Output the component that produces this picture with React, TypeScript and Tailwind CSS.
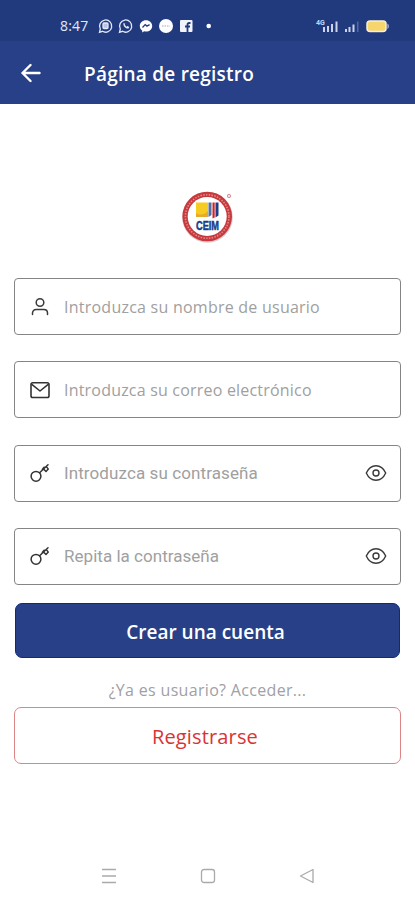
import type { ReactNode } from "react";

function UserIcon() {
  return (
    <svg width="22" height="22" viewBox="0 0 22 22" fill="none" stroke="#3a3a3a" strokeWidth="1.5" strokeLinecap="round">
      <circle cx="11" cy="6.5" r="3.8" />
      <path d="M3.5 18.5v-1.4c0-2.3 1.5-3.6 3.7-3.6h7.6c2.2 0 3.7 1.3 3.7 3.6v1.4" />
    </svg>
  );
}

function MailIcon() {
  return (
    <svg width="22" height="22" viewBox="0 0 22 22" fill="none" stroke="#333" strokeWidth="1.6" strokeLinejoin="round">
      <rect x="2" y="3.7" width="18" height="14.8" rx="1.8" />
      <path d="M2.5 5.2 11 12l8.500-6.800" />
    </svg>
  );
}

function KeyIcon() {
  return (
    <svg width="22" height="22" viewBox="0 0 22 22" fill="none" stroke="#333" strokeWidth="1.5" strokeLinecap="round" strokeLinejoin="round">
      <circle cx="7" cy="14.3" r="4.9" />
      <path d="M10.600 10.800 19 2.800M13.300 7.500l1.800-2.300M14.800 7.200l2.200 2.300 2.300-2.400-1.900-2.500" />
    </svg>
  );
}

function EyeIcon() {
  return (
    <svg width="22" height="22" viewBox="0 0 22 22" fill="none" stroke="#3a3a3a" strokeWidth="1.4" strokeLinejoin="round">
      <path d="M1.3 11C3.4 6.400 7 3.800 11 3.800s7.600 2.600 9.700 7.200c-2.100 4.600-5.700 7.200-9.700 7.200S3.400 15.600 1.300 11Z" />
      <circle cx="11" cy="11" r="3" />
    </svg>
  );
}

function Logo() {
  return (
    <svg width="52" height="52" viewBox="0 0 52 52">
      <circle cx="25.5" cy="26.4" r="25.3" fill="#ddcccc" />
      <circle cx="25.2" cy="25.5" r="24.8" fill="#c8393d" />
      <circle cx="25.2" cy="25.5" r="21.8" fill="none" stroke="#dc8a88" strokeWidth="1.6" strokeDasharray="1.5 1.3" />
      <circle cx="25.2" cy="25.500" r="19.500" fill="#fff" />
      <path d="M14 11.500h12v14.500H14z" fill="#f6cb22" />
      <path d="M14 22c3.500 2.500 9 2 12-2v6H14z" fill="#e9a92c" />
      <path d="M26.500 11.500h3v12.500l-3 2z" fill="#53719c" />
      <path d="M30.500 11.500h2.200v15l-2.200 1z" fill="#c9262c" />
      <path d="M33.500 11.500h3v13l-3 2z" fill="#243c82" />
      <text x="14" y="38.500" textLength="23" lengthAdjust="spacingAndGlyphs" fill="#173d8c" stroke="#173d8c" strokeWidth=".5" className="font-['Liberation_Sans',sans-serif] text-[12px] font-bold">
        CEIM
      </text>
      <circle cx="47" cy="5" r="1.700" fill="#f5dede" stroke="#c98080" strokeWidth=".8" />
    </svg>
  );
}

function StatusBar() {
  return (
    <div className="flex h-[41px] items-center bg-[#21397d] pt-[11px] pl-[60px]">
      <span className="w-[38px] font-['Open_Sans',sans-serif] text-[14px] leading-none tracking-[0.2px] text-[#e4e9f8]">8:47</span>
      <svg width="116" height="16" viewBox="0 0 116 16" fill="none" stroke="#e4e9f8" strokeWidth="1.3">
        <path d="M1.5 14.3 2.3 11a6.1 6.1 0 1 1 2.2 2.3z" />
        <rect x="5" y="5" width="5" height="5.5" rx="1" fill="#b9c5e4" />
        <path d="M21.5 14.3 22.3 11a6.1 6.1 0 1 1 2.2 2.3z" />
        <path d="M25.5 5c-.8 3 2.3 6 5 5.5l.8-1.5-1.8-1-1 .8-1.8-2 .6-1z" fill="#e4e9f8" stroke="none" />
        <path d="M48 2.200c-3.500 0-6.200 2.500-6.200 5.700 0 2 1 3.500 2.400 4.500v2l2-1.100c.6.200 1.200.3 1.800.3 3.500 0 6.200-2.500 6.200-5.700S51.500 2.200 48 2.200z" fill="#fff" stroke="none" />
        <path d="m44.500 9.500 2.700-2.900 1.700 1.500 2.700-1.500" stroke="#21397d" />
        <circle cx="68" cy="8" r="7" fill="#fff" stroke="none" />
        <path d="M64 8h8" stroke="#bdc6dd" strokeDasharray="1.5 1" />
        <rect x="82" y="2" width="12.5" height="12" rx="1" fill="#f2f4fb" stroke="none" />
        <path d="M92.500 5h-1.300c-1.300 0-1.700.7-1.700 1.700V14M87 8.500h5" stroke="#21397d" strokeWidth="1.8" />
        <circle cx="110.700" cy="8" r="2.300" fill="#fff" stroke="none" />
      </svg>
      <svg width="76" height="16" viewBox="0 0 76 16" className="ml-[101px]" fill="#cbd4eb">
        <text x="1" y="7" fill="#cbd4eb" className="font-['Roboto',sans-serif] text-[7px] font-bold">4G</text>
        <path d="M8 9h2v5H8zM12 8h2v6h-2zM16 6h2v8h-2zM20.500 3.500h2V14h-2z" />
        <path d="M30 11h2v3h-2zM33.500 9h2v5h-2zM37.500 6.500h2V14h-2z" />
        <path d="M42 3.500h1.500V14H42z" fill="#5269a2" />
        <rect x="52" y="3" width="19" height="10.500" rx="3" fill="#f7d56d" stroke="#f3efdc" strokeWidth="1.500" />
        <path d="M72.500 5.500c1.600.7 1.600 4.800 0 5.500z" />
      </svg>
    </div>
  );
}

type FieldProps = {
  icon: ReactNode;
  placeholder: string;
  textClass: string;
  password?: boolean;
};

function Field({ icon, placeholder, textClass, password }: FieldProps) {
  return (
    <label className="flex h-[57px] items-center rounded-[4px] border border-[#858585] pr-[13px] pl-[14px]">
      {icon}
      <span className={`ml-[13px] flex-1 whitespace-nowrap text-[#a0a0a0] ${textClass}`}>{placeholder}</span>
      {password && <EyeIcon />}
    </label>
  );
}

export default function App() {
  return (
    <div className="flex h-[900px] w-[415px] flex-col overflow-hidden bg-white font-['Open_Sans',sans-serif]">
      <StatusBar />
      <header className="flex h-[63px] items-center bg-[#284087] pl-[21px] text-white">
        <svg width="20" height="20" viewBox="0 0 20 20" fill="none" stroke="#fff" strokeWidth="2.4" strokeLinecap="round" strokeLinejoin="round">
          <path d="M18.500 10H1.500M9.500 2 1.500 10l8 8" />
        </svg>
        <h1 className="ml-[43px] pt-[4px] text-[19px] leading-none font-semibold tracking-[0.24px] whitespace-nowrap">Página de registro</h1>
      </header>

      <main className="flex flex-1 flex-col px-[14px]">
        <div className="mt-[87px] flex h-[52px] justify-center">
          <Logo />
        </div>

        <div className="mt-[35px] flex flex-col gap-[26.3px]">
          <Field icon={<UserIcon />} placeholder="Introduzca su nombre de usuario" textClass="text-[16px] tracking-[0.24px]" />
          <Field icon={<MailIcon />} placeholder="Introduzca su correo electrónico" textClass="text-[16px] tracking-[0.2px]" />
          <Field icon={<KeyIcon />} placeholder="Introduzca su contraseña" textClass="pt-px font-['Roboto',sans-serif] text-[17px] tracking-[0.1px]" password />
          <Field icon={<KeyIcon />} placeholder="Repita la contraseña" textClass="pt-px font-['Roboto',sans-serif] text-[17px] tracking-[0.03px]" password />
        </div>

        <button className="mx-px mt-[18px] h-[55px] rounded-[7px] border border-[#11297c] bg-[#284087] pt-[3px] pr-[4px] text-[19px] font-semibold text-white">
          Crear una cuenta
        </button>
        <p className="mt-[20px] h-[29px] text-center text-[16px] leading-[24px] tracking-[0.32px] text-[#a0a0a6]">¿Ya es usuario? Acceder...</p>
        <button className="h-[57px] rounded-[7px] border border-[#dc8585] pt-[3px] pr-[5px] text-[20px] tracking-[0.15px] text-[#d93434]">
          Registrarse
        </button>
      </main>

      <nav className="flex h-[48px] items-center justify-between pr-[99px] pl-[100px]">
        <svg width="18" height="18" viewBox="0 0 18 18" stroke="#aaa" strokeWidth="1.3">
          <path d="M2 2.500h14M2 9h14M2 15.500h14" />
        </svg>
        <svg width="18" height="18" viewBox="0 0 18 18" fill="none" stroke="#aaa" strokeWidth="1.300">
          <rect x="2.500" y="2.500" width="13" height="13" rx="2.500" />
        </svg>
        <svg width="18" height="18" viewBox="0 0 18 18" fill="none" stroke="#aaa" strokeWidth="1.300" strokeLinejoin="round">
          <path d="M15 2.500v13L2.500 9z" />
        </svg>
      </nav>
    </div>
  );
}
